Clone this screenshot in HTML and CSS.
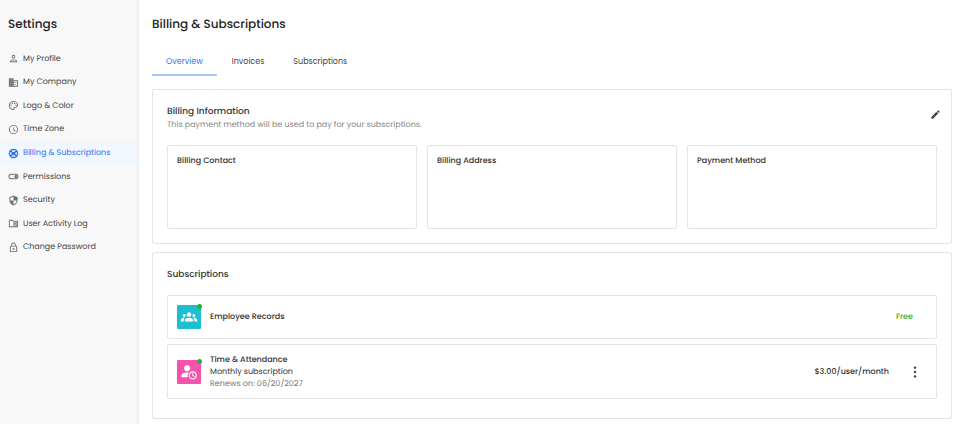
FILE: index.html
```html
<!DOCTYPE html>
<html lang="en">
<head>
    <meta charset="UTF-8">
    <meta name="viewport" content="width=device-width, initial-scale=1.0">
    <link rel="stylesheet" href="styles.css">
    <title>Billing &amp; Subscriptions</title>
</head>
<body>
    <div class="page">
        <aside class="sidebar">
            <h2 class="sidebar-title">Settings</h2>
            <nav class="menu">
                <a href="#" class="menu-item">
                    <svg class="icon" viewBox="0 0 24 24"><path d="M12 6a2 2 0 1 1 0 4 2 2 0 0 1 0-4m0 10c2.700 0 5.800 1.290 6 2H6c.23-.72 3.310-2 6-2m0-12a4 4 0 1 0 0 8 4 4 0 0 0 0-8zm0 10c-2.670 0-8 1.340-8 4v2h16v-2c0-2.660-5.330-4-8-4z"/></svg>
                    <span>My Profile</span>
                </a>
                <a href="#" class="menu-item">
                    <svg class="icon" viewBox="0 0 24 24"><path fill-opacity=".6" d="M2 3h10v18H2z"/><path d="M12 7V3H2v18h20V7H12zM6 19H4v-2h2v2zm0-4H4v-2h2v2zm0-4H4V9h2v2zm0-4H4V5h2v2zm4 12H8v-2h2v2zm0-4H8v-2h2v2zm0-4H8V9h2v2zm0-4H8V5h2v2zm10 12h-8v-2h2v-2h-2v-2h2v-2h-2V9h8v10zm-2-8h-2v2h2v-2zm0 4h-2v2h2v-2z"/></svg>
                    <span>My Company</span>
                </a>
                <a href="#" class="menu-item">
                    <svg class="icon" viewBox="0 0 24 24"><path d="M12 22C6.490 22 2 17.510 2 12S6.490 2 12 2s10 4.040 10 9c0 3.310-2.690 6-6 6h-1.770c-.28 0-.5.22-.5.5 0 .12.05.23.13.33.41.47.64 1.060.64 1.670A2.500 2.500 0 0 1 12 22zm0-18c-4.410 0-8 3.590-8 8s3.590 8 8 8c.28 0 .5-.22.5-.5a.54.54 0 0 0-.14-.35c-.41-.46-.63-1.050-.63-1.650a2.500 2.500 0 0 1 2.500-2.500H16c2.210 0 4-1.790 4-4 0-3.860-3.590-7-8-7z"/><circle cx="6.500" cy="11.500" r="1.500"/><circle cx="9.500" cy="7.500" r="1.500"/><circle cx="14.500" cy="7.500" r="1.500"/><circle cx="17.500" cy="11.500" r="1.500"/></svg>
                    <span>Logo &amp; Color</span>
                </a>
                <a href="#" class="menu-item">
                    <svg class="icon" viewBox="0 0 24 24"><path d="M12 2a10 10 0 1 0 0 20 10 10 0 0 0 0-20zm0 18a8 8 0 1 1 0-16 8 8 0 0 1 0 16zm.5-13H11v6l5.200 3.200.8-1.300-4.500-2.700z"/></svg>
                    <span>Time Zone</span>
                </a>
                <a href="#" class="menu-item active">
                    <svg class="icon" viewBox="0 0 24 24"><path fill-rule="evenodd" d="M12 1.500a10.500 10.500 0 1 0 0 21 10.500 10.500 0 0 0 0-21zM8.500 4l3.500 2 3.500-2 1 .5-2.500 4h-4L7.500 4.500zM4 8.500l4 2v3l-4 2-.5-1 2-2.500-2-2.500zM20 8.500l-4 2v3l4 2 .5-1-2-2.500 2-2.500zM10 15.500h4l2.500 4-1 .5-3.500-2-3.500 2-1-.5z"/></svg>
                    <span>Billing &amp; Subscriptions</span>
                </a>
                <a href="#" class="menu-item">
                    <svg class="icon" viewBox="0 0 24 24"><path fill-rule="evenodd" d="M7 6h10a6 6 0 0 1 0 12H7A6 6 0 0 1 7 6zm0 2a4 4 0 0 0 0 8h10a4 4 0 0 0 0-8z"/><rect x="14" y="8.500" width="6" height="7" rx="3"/></svg>
                    <span>Permissions</span>
                </a>
                <a href="#" class="menu-item">
                    <svg class="icon" viewBox="0 0 24 24"><path d="M12 1L3 5v6c0 5.550 3.840 10.740 9 12 5.160-1.260 9-6.450 9-12V5l-9-4zm0 10.990h7c-.53 4.120-3.280 7.790-7 8.940V12H5V6.300l7-3.110v8.800z"/></svg>
                    <span>Security</span>
                </a>
                <a href="#" class="menu-item">
                    <svg class="icon" viewBox="0 0 24 24"><path fill-rule="evenodd" d="M2 4h8l2 2h10v14H2zm2 2v12h16V8h-8.800l-2-2z"/><path fill-rule="evenodd" d="M12 9h7v9h-7zm1.500 1.500v1h4v-1zm0 2.500v1h4v-1zm0 2.500v1h4v-1z"/></svg>
                    <span>User Activity Log</span>
                </a>
                <a href="#" class="menu-item">
                    <svg class="icon" viewBox="0 0 24 24"><path d="M18 8h-1V6A5 5 0 0 0 7 6v2H6a2 2 0 0 0-2 2v10c0 1.100.9 2 2 2h12a2 2 0 0 0 2-2V10a2 2 0 0 0-2-2zM9 6a3 3 0 0 1 6 0v2H9V6zm9 14H6V10h12v10zm-6-3a2 2 0 1 0 0-4 2 2 0 0 0 0 4z"/></svg>
                    <span>Change Password</span>
                </a>
            </nav>
        </aside>

        <main class="content">
            <h1 class="page-title">Billing &amp; Subscriptions</h1>
            <div class="tabs">
                <button class="tab selected">Overview</button>
                <button class="tab">Invoices</button>
                <button class="tab">Subscriptions</button>
            </div>

            <section class="card">
                <div class="card-head">
                    <div>
                        <h3 class="card-title">Billing Information</h3>
                        <p class="muted">This payment method will be used to pay for your subscriptions.</p>
                    </div>
                    <button class="icon-btn edit" aria-label="Edit billing information">
                        <svg class="icon" viewBox="0 0 24 24"><path d="M3 17.250V21h3.750L17.810 9.940l-3.750-3.750L3 17.250zM20.710 7.040a1 1 0 0 0 0-1.410l-2.340-2.340a1 1 0 0 0-1.410 0l-1.830 1.830 3.750 3.750 1.830-1.830z"/></svg>
                    </button>
                </div>
                <div class="boxes">
                    <div class="box">Billing Contact</div>
                    <div class="box">Billing Address</div>
                    <div class="box">Payment Method</div>
                </div>
            </section>

            <section class="card subscriptions">
                <h3 class="card-title">Subscriptions</h3>
                <div class="sub-row">
                    <div class="app-icon teal">
                        <svg viewBox="0 0 24 24"><circle cx="12" cy="8.500" r="3"/><circle cx="5.500" cy="10" r="2"/><circle cx="18.500" cy="10" r="2"/><path d="M6.500 18v-1.500c0-2 2.500-3.500 5.500-3.500s5.500 1.500 5.500 3.500V18zM1 18v-1.500C1 14.500 3 13 5.500 13l1.100.1C5.500 14 5 15 5 16.300V18zM23 18v-1.500c0-2-2-3.500-4.500-3.500l-1.100.1c1.100.9 1.600 1.900 1.600 3.200V18z"/></svg>
                        <span class="dot"></span>
                    </div>
                    <div class="sub-info">
                        <p class="sub-name">Employee Records</p>
                    </div>
                    <span class="free">Free</span>
                </div>
                <div class="sub-row tall">
                    <div class="app-icon pink">
                        <svg viewBox="0 0 24 24"><circle cx="9.500" cy="7" r="4"/><path d="M2 19v-2c0-3 3.500-4.500 7.500-4.500.8 0 1.500.1 2.200.2A6.600 6.600 0 0 0 10.300 19z"/><path fill-rule="evenodd" d="M17 11a5.500 5.500 0 1 0 0 11 5.500 5.500 0 0 0 0-11zm0 1.700a3.800 3.800 0 1 1 0 7.600 3.800 3.800 0 0 1 0-7.600zM16.300 13.700h1.400v2.500l2 1.300-.7 1.100-2.700-1.700z"/></svg>
                        <span class="dot"></span>
                    </div>
                    <div class="sub-info">
                        <p class="sub-name">Time &amp; Attendance</p>
                        <p class="sub-type">Monthly subscription</p>
                        <p class="renews">Renews on: 06/20/2027</p>
                    </div>
                    <span class="price">$3.00/user/month</span>
                    <button class="icon-btn" aria-label="More options">
                        <svg class="more" viewBox="0 0 4 16"><circle cx="2" cy="3" r="1.400"/><circle cx="2" cy="8" r="1.400"/><circle cx="2" cy="13" r="1.400"/></svg>
                    </button>
                </div>
            </section>
        </main>
    </div>
</body>
</html>
```
FILE: styles.css
```css
* {
    box-sizing: border-box;
}
body {
    margin: 0;
    background-color: #fff;
    color: #333;
    font-family: Poppins, Inter, sans-serif;
    font-size: 8px;
    line-height: 12px;
    text-rendering: geometricPrecision;
}
h1, h2, h3, p {
    margin: 0;
    font-weight: 500;
}
button {
    padding: 0;
    border: none;
    background: none;
    color: inherit;
    font: inherit;
    cursor: pointer;
}
.page {
    display: flex;
    min-height: 100vh;
}

/* sidebar */
.sidebar {
    flex: 0 0 139px;
    padding-top: 15px;
    background-color: #f8f8f8;
    border-right: 2px solid #eee;
}
.sidebar-title, .page-title {
    font-size: 12px;
    line-height: 20px;
    color: #222;
}
.sidebar-title {
    padding-left: 8px;
}
.menu {
    display: flex;
    flex-direction: column;
    min-height: 212px;
    margin-top: 12px;
}
.menu-item {
    flex: 1;
    display: flex;
    align-items: center;
    gap: 4px;
    padding-left: 8px;
    color: #444;
    text-decoration: none;
}
.menu-item.active {
    background-color: #f1f7ff;
    color: #2f74f5;
}
.icon {
    display: block;
    width: 11px;
    height: 11px;
    fill: #707070;
}
.menu-item.active .icon {
    fill: #2f74f5;
}

/* content */
.content {
    flex: 1;
    min-width: 0;
    padding: 15px 23px 6px 13px;
}
.tabs {
    display: flex;
    gap: 1px;
    margin: 11px 0 13px;
}
.tab {
    padding: 10px 14px 6px;
    border-bottom: 2px solid transparent;
    color: #444;
}
.tab.selected {
    color: #2f74f5;
    border-bottom-color: #a6c8fb;
}
.card {
    padding: 15px 14px 14px;
    border: 1px solid #e4e4e4;
    border-radius: 2px;
}
.card-head {
    display: flex;
    align-items: flex-start;
    justify-content: space-between;
}
.edit {
    margin: 4px -4px 0 0;
}
.edit .icon {
    fill: #444;
}
.card-title {
    font-size: 9px;
    line-height: 14px;
}
.muted {
    color: #888;
    font-weight: 400;
}
.boxes {
    display: grid;
    grid-template-columns: repeat(3, 1fr);
    gap: 10px;
    margin-top: 14px;
}
.box {
    min-height: 84px;
    padding: 9px;
    border: 1px solid #e4e4e4;
    border-radius: 2px;
    font-weight: 500;
}

/* subscriptions list */
.subscriptions {
    margin-top: 8px;
    padding-bottom: 19px;
}
.subscriptions .card-title {
    margin-bottom: 13px;
}
.sub-row {
    display: flex;
    align-items: center;
    min-height: 44px;
    padding: 0 23px 0 9px;
    border: 1px solid #e4e4e4;
    border-radius: 2px;
    font-weight: 500;
}
.sub-row.tall {
    min-height: 55px;
    margin-top: 5px;
    padding-right: 15px;
}
.app-icon {
    position: relative;
    width: 24px;
    height: 24px;
    padding: 3px;
    border-radius: 1px;
}
.app-icon svg {
    display: block;
    fill: #fff;
}
.teal {
    background-color: #1bbfd0;
}
.pink {
    background-color: #f752ab;
}
.dot {
    position: absolute;
    top: -1px;
    right: -1px;
    width: 5px;
    height: 5px;
    border-radius: 50%;
    background-color: #20b52c;
}
.sub-info {
    flex: 1;
    padding-left: 9px;
}
.sub-type {
    font-weight: 400;
}
.renews {
    color: #777;
    font-weight: 400;
}
.free {
    color: #36b13b;
}
.price {
    margin-right: 20px;
}
.more {
    display: block;
    width: 12px;
    height: 14px;
    fill: #444;
}
```
